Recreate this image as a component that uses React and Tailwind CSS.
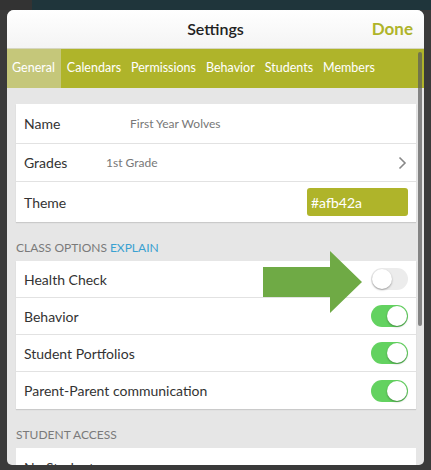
import React from "react";

const tabs = ["General", "Calendars", "Permissions", "Behavior", "Students", "Members"];

const options = [
  { label: "Health Check", on: false },
  { label: "Behavior", on: true },
  { label: "Student Portfolios", on: true },
  { label: "Parent-Parent communication", on: true },
];

const Toggle = ({ on }) => (
  <div
    className={`w-[37px] h-[22px] rounded-full flex items-center px-[1px] ${
      on ? "bg-[#63d260] justify-end" : "bg-[#ececec] justify-start"
    }`}
  >
    <div className="w-[20px] h-[20px] rounded-full bg-white shadow-[0_1px_2px_rgba(0,0,0,0.35)]" />
  </div>
);

const App = () => {
  return (
    <div
      className="relative w-[431px] h-[470px] bg-[#3a3a3a] overflow-hidden"
      style={{ fontFamily: 'Lato, "Open Sans", sans-serif' }}
    >
      <div className="h-[10px] flex">
        <div className="w-[32px] bg-[#333]" />
        <div className="flex-1 bg-[#1f353b]" />
      </div>

      <div className="relative mx-[7px] h-[455px] rounded-t-[7px] rounded-b-[5px] bg-[#e6e6e6] overflow-hidden flex flex-col">
        {/* header */}
        <div className="h-[39px] shrink-0 bg-gradient-to-b from-white to-[#f4f4f4] flex items-center justify-center relative border-b border-[#d6d6c0]">
          <span className="text-[16px] text-[#222] font-semibold">Settings</span>
          <span className="absolute right-[11px] text-[17px] font-bold text-[#afb42a]">Done</span>
        </div>

        {/* tabs */}
        <div className="h-[39px] shrink-0 bg-[#afb42a] flex items-stretch">
          {tabs.map((t, i) => (
            <div
              key={t}
              className={`flex items-center text-[12.5px] text-white ${
                i === 0 ? "bg-[#c5c77a] pl-[5px] pr-[6px] mr-[6px]" : "mr-[10px]"
              }`}
            >
              {t}
            </div>
          ))}
        </div>

        {/* content */}
        <div className="flex-1 overflow-hidden pl-[9px] pr-[8px] pt-[16px] text-[#333]">
          <div className="bg-white shadow-[0_1px_1px_rgba(0,0,0,0.12)]">
            <div className="h-[40px] flex items-center px-[8px] border-b border-[#e2e2e2]">
              <span className="text-[14px] w-[106px]">Name</span>
              <span className="text-[12px] text-[#777]">First Year Wolves</span>
            </div>
            <div className="h-[38px] flex items-center px-[8px] border-b border-[#e2e2e2]">
              <span className="text-[14px] w-[82px]">Grades</span>
              <span className="text-[12px] text-[#777] flex-1">1st Grade</span>
              <svg width="9" height="14" viewBox="0 0 9 14" className="mr-[1px]">
                <path d="M1.5 1.5 L7 7 L1.5 12.5" fill="none" stroke="#888" strokeWidth="1.6" />
              </svg>
            </div>
            <div className="h-[40px] flex items-center justify-between pl-[8px] pr-[8px]">
              <span className="text-[14px]">Theme</span>
              <div className="w-[101px] h-[28px] rounded-[3px] bg-[#afb42a] text-white text-[14px] flex items-center px-[4px]">
                #afb42a
              </div>
            </div>
          </div>

          <div className="h-[39px] flex items-end pb-[4px] text-[12px] text-[#7a7a7a]">
            CLASS OPTIONS<span className="ml-[3px] text-[#3aa1d1]">EXPLAIN</span>
          </div>

          <div className="bg-white shadow-[0_1px_1px_rgba(0,0,0,0.12)]">
            {options.map((o, i) => (
              <div
                key={o.label}
                className={`h-[37px] flex items-center justify-between pl-[8px] pr-[8px] ${
                  i < options.length - 1 ? "border-b border-[#e2e2e2]" : ""
                }`}
              >
                <span className="text-[14px]">{o.label}</span>
                <Toggle on={o.on} />
              </div>
            ))}
          </div>

          <div className="h-[39px] flex items-end pb-[4px] text-[12px] text-[#7a7a7a]">
            STUDENT ACCESS
          </div>
          <div className="bg-white h-[40px] flex items-start px-[8px] pt-[12px]">
            <span className="text-[14px] leading-[16px]">No Students</span>
          </div>
        </div>

        {/* scrollbar */}
        <div className="absolute right-[2px] top-[42px] w-[4px] h-[274px] rounded-full bg-[#5a5a5a]/70" />
      </div>

      {/* arrow */}
      <svg className="absolute left-[263px] top-[251px]" width="100" height="62" viewBox="0 0 100 62">
        <polygon points="0,16 67,16 67,0 99,31 67,62 67,46 0,46" fill="#6faa45" />
      </svg>
    </div>
  );
};

export default App;
